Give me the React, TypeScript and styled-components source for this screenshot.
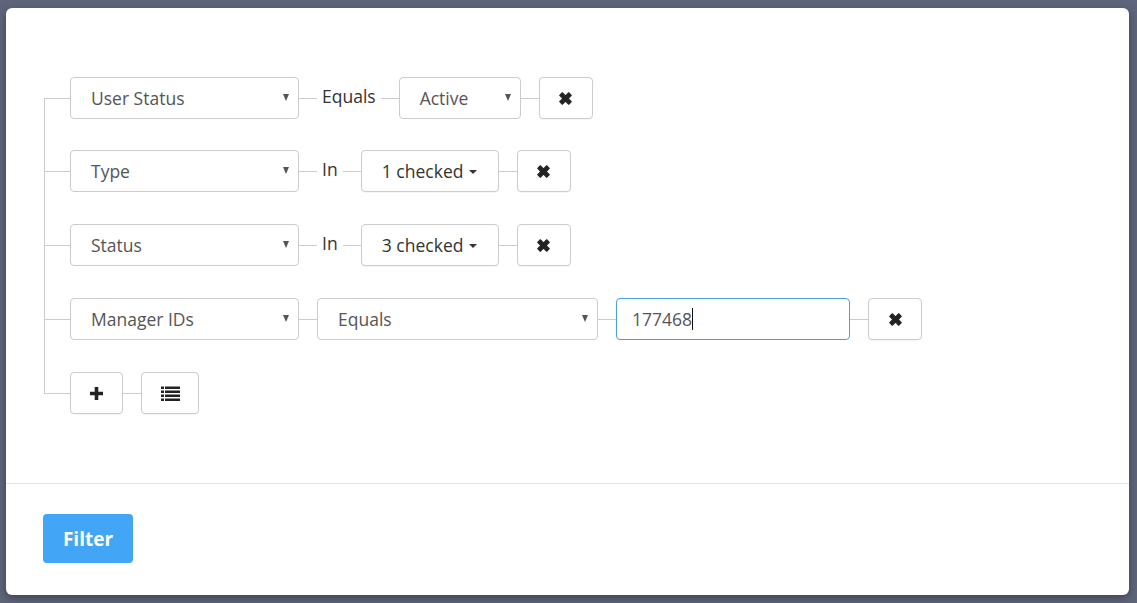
import React from 'react'
import styled, { createGlobalStyle } from 'styled-components'

const GlobalStyle = createGlobalStyle`
  html, body {
    margin: 0;
    padding: 0;
    background: #5e657b;
    font-family: 'Open Sans', 'Liberation Sans', sans-serif;
  }
`

const Backdrop = styled.div`
  width: 1137px;
  height: 603px;
  padding: 8px 8px 8px 6px;
  box-sizing: border-box;
  background: #5e657b;
`

const Modal = styled.div`
  width: 1123px;
  height: 587px;
  background: #fff;
  border-radius: 6px;
  box-shadow: 0 3px 9px rgba(0, 0, 0, 0.35);
  display: flex;
  flex-direction: column;
  overflow: hidden;
`

const Body = styled.div`
  height: 476px;
  box-sizing: border-box;
  padding: 69px 0 0 38px;
  border-bottom: 1px solid #e5e5e5;
`

const Tree = styled.div`
  position: relative;
  display: flex;
  flex-direction: column;
  gap: 32px;
  padding-left: 26px;

  &::before {
    content: '';
    position: absolute;
    left: 0;
    top: 21px;
    bottom: 20px;
    width: 1px;
    background: #ccc;
  }
`

const Row = styled.div`
  display: flex;
  align-items: center;
  height: 42px;
  margin-left: -26px;

  &:first-child {
    margin-bottom: -1px;
  }
`

const Link = styled.span<{ $w?: number }>`
  width: ${(p) => p.$w ?? 18}px;
  height: 1px;
  background: #ccc;
  flex: none;
`

const Select = styled.div<{ $w: number }>`
  width: ${(p) => p.$w}px;
  height: 42px;
  box-sizing: border-box;
  border: 1px solid #ccc;
  border-radius: 4px;
  display: flex;
  align-items: center;
  justify-content: space-between;
  padding: 0 9px 0 20px;
  font-size: 17.5px;
  color: #555;
  flex: none;
`

const Arrow = styled.span`
  width: 0;
  height: 0;
  border-left: 3.5px solid transparent;
  border-right: 3.5px solid transparent;
  border-top: 7px solid #555;
  margin-top: -2px;
`

const Operator = styled.span`
  font-size: 17.5px;
  color: #333;
  padding: 0 5px;
  margin-top: -5px;
`

const Button = styled.div<{ $w: number }>`
  width: ${(p) => p.$w}px;
  height: 42px;
  box-sizing: border-box;
  border: 1px solid #ccc;
  border-radius: 4px;
  display: flex;
  align-items: center;
  justify-content: center;
  gap: 6px;
  font-size: 17.5px;
  color: #333;
  background: #fff;
  flex: none;
  box-shadow: 0 1px 1px rgba(0, 0, 0, 0.04);
`

const Caret = styled.span`
  width: 0;
  height: 0;
  border-left: 4.5px solid transparent;
  border-right: 4.5px solid transparent;
  border-top: 4.5px solid #333;
  margin-top: 2px;
`

const Input = styled.div`
  width: 234px;
  height: 42px;
  box-sizing: border-box;
  border: 1px solid #4a9fe2;
  border-radius: 4px;
  display: flex;
  align-items: center;
  padding: 0 15px;
  font-size: 17.5px;
  color: #555;
  flex: none;
`

const Cursor = styled.span`
  width: 1px;
  height: 22px;
  background: #111;
`

const Footer = styled.div`
  padding: 30px 0 0 37px;
`

const FilterButton = styled.button`
  width: 90px;
  height: 49px;
  border: none;
  border-radius: 4px;
  background: #42a5f5;
  color: #fff;
  font-family: inherit;
  font-size: 19px;
  font-weight: 700;
  padding: 0;
`

const TimesIcon = () => (
  <svg width="15" height="15" viewBox="0 0 14 14">
    <path
      d="M1.6 4 L4 1.6 L7 4.6 L10 1.6 L12.4 4 L9.4 7 L12.4 10 L10 12.4 L7 9.4 L4 12.4 L1.6 10 L4.6 7 Z"
      fill="#222"
      strokeLinejoin="round"
      stroke="#222"
      strokeWidth="1"
    />
  </svg>
)

const PlusIcon = () => (
  <svg width="15" height="15" viewBox="0 0 15 15">
    <path d="M5.7 1 H9.3 V5.7 H14 V9.3 H9.3 V14 H5.7 V9.3 H1 V5.7 H5.7 Z" fill="#222" />
  </svg>
)

const ListIcon = () => (
  <svg width="19" height="15" viewBox="0 0 19 15">
    <rect x="0" y="0.5" width="3" height="2.5" fill="#222" />
    <rect x="0" y="4.5" width="3" height="2.5" fill="#222" />
    <rect x="0" y="8.5" width="3" height="2.5" fill="#222" />
    <rect x="0" y="12.5" width="3" height="2.5" fill="#222" />
    <rect x="4" y="0.5" width="15" height="2.5" fill="#222" />
    <rect x="4" y="4.5" width="15" height="2.5" fill="#222" />
    <rect x="4" y="8.5" width="15" height="2.5" fill="#222" />
    <rect x="4" y="12.5" width="15" height="2.5" fill="#222" />
  </svg>
)

const FieldSelect = ({ label, width }: { label: string; width: number }) => (
  <Select $w={width}>
    <span>{label}</span>
    <Arrow />
  </Select>
)

const App = () => {
  return (
    <Backdrop>
      <GlobalStyle />
      <Modal>
        <Body>
          <Tree>
            <Row>
              <Link $w={26} />
              <FieldSelect label="User Status" width={229} />
              <Link />
              <Operator>Equals</Operator>
              <Link />
              <FieldSelect label="Active" width={122} />
              <Link />
              <Button $w={54}>
                <TimesIcon />
              </Button>
            </Row>
            <Row>
              <Link $w={26} />
              <FieldSelect label="Type" width={229} />
              <Link />
              <Operator>In</Operator>
              <Link />
              <Button $w={138}>
                1 checked <Caret />
              </Button>
              <Link />
              <Button $w={54}>
                <TimesIcon />
              </Button>
            </Row>
            <Row>
              <Link $w={26} />
              <FieldSelect label="Status" width={229} />
              <Link />
              <Operator>In</Operator>
              <Link />
              <Button $w={138}>
                3 checked <Caret />
              </Button>
              <Link />
              <Button $w={54}>
                <TimesIcon />
              </Button>
            </Row>
            <Row>
              <Link $w={26} />
              <FieldSelect label="Manager IDs" width={229} />
              <Link />
              <FieldSelect label="Equals" width={281} />
              <Link />
              <Input>
                177468
                <Cursor />
              </Input>
              <Link />
              <Button $w={54}>
                <TimesIcon />
              </Button>
            </Row>
            <Row>
              <Link $w={26} />
              <Button $w={53}>
                <PlusIcon />
              </Button>
              <Link />
              <Button $w={58}>
                <ListIcon />
              </Button>
            </Row>
          </Tree>
        </Body>
        <Footer>
          <FilterButton>Filter</FilterButton>
        </Footer>
      </Modal>
    </Backdrop>
  )
}

export default App
